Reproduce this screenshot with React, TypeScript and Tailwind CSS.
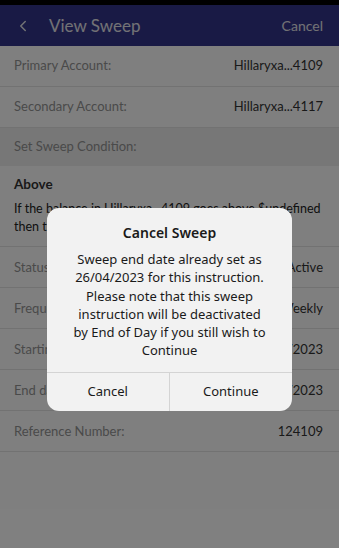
import { ChevronLeft } from "lucide-react";

const ROWS_TOP = [
  { label: "Primary Account:", value: "Hillaryxa...4109" },
  { label: "Secondary Account:", value: "Hillaryxa...4117" },
];

const ROWS_BOTTOM = [
  { label: "Status:", value: "Active" },
  { label: "Frequency:", value: "Weekly" },
  { label: "Starting Date:", value: "19/04/2023" },
  { label: "End date:", value: "26/04/2023" },
  { label: "Reference Number:", value: "124109" },
];

function Row({ label, value }: { label: string; value: string }) {
  return (
    <div className="flex h-[41px] items-center justify-between border-b border-[#e4e4e4] pl-[14px] pr-4 text-[13px]">
      <span className="text-[#949494]">{label}</span>
      <span className="text-[#333]">{value}</span>
    </div>
  );
}

export default function App() {
  return (
    <div className="relative h-[548px] w-[339px] overflow-hidden bg-white font-['Lato','Liberation_Sans',sans-serif]">
      <div className="h-[5px] bg-black" />
      <header className="flex h-[41px] items-center bg-[#33358a] pr-4 text-[#e4e4ea]">
        <ChevronLeft className="ml-[14px] h-[18px] w-[18px]" strokeWidth={2} />
        <h1 className="ml-[17px] text-[17px]">View Sweep</h1>
        <button className="ml-auto text-[14px]">Cancel</button>
      </header>

      {ROWS_TOP.map((r) => (
        <Row key={r.label} {...r} />
      ))}

      <div className="flex h-[38px] items-center bg-[#eeeeee] pl-[14px] text-[13px] text-[#949494]">
        Set Sweep Condition:
      </div>

      <div className="border-b border-[#e4e4e4] pb-[10px] pl-[14px] pr-4 pt-[8px]">
        <div className="text-[13.5px] font-bold text-[#333]">Above</div>
        <p className="mt-[6px] text-[12.5px] leading-[18px] text-[#222]">
          If the balance in Hillaryxa...4109 goes above $undefined then transfer the excess
        </p>
      </div>

      {ROWS_BOTTOM.map((r) => (
        <Row key={r.label} {...r} />
      ))}

      {/* overlay + dialog */}
      <div className="absolute inset-0 bg-black/50" />
      <div className="absolute left-[47px] top-[208px] w-[245px] overflow-hidden rounded-[12px] bg-[#f2f2f2] font-['Noto_Sans','Open_Sans',sans-serif] text-[#1a1a1a]">
        <div className="px-[26px] pb-[12px] pt-[15px] text-center">
          <div className="text-[14px] font-semibold leading-[20px]">Cancel Sweep</div>
          <p className="mt-[7px] text-[13px] leading-[18.3px]">
            Sweep end date already set as 26/04/2023 for this instruction. Please note that this sweep instruction will be
            deactivated by End of Day if you still wish to Continue
          </p>
        </div>
        <div className="grid h-[39px] grid-cols-2 border-t border-[#d4d4d4] text-[13px]">
          <button className="border-r border-[#d4d4d4]">Cancel</button>
          <button>Continue</button>
        </div>
      </div>
    </div>
  );
}
